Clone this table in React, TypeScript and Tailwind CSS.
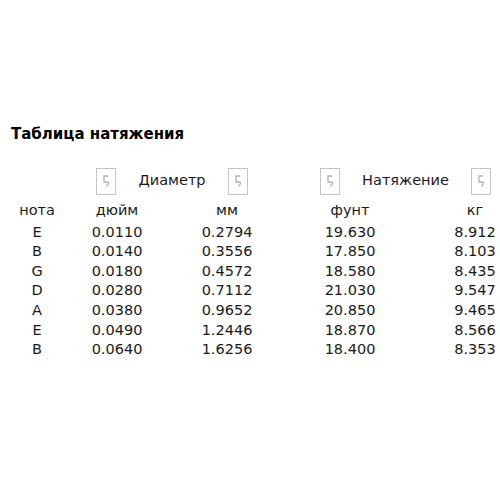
const rows = [
  ["E", "0.0110", "0.2794", "19.630", "8.912"],
  ["B", "0.0140", "0.3556", "17.850", "8.103"],
  ["G", "0.0180", "0.4572", "18.580", "8.435"],
  ["D", "0.0280", "0.7112", "21.030", "9.547"],
  ["A", "0.0380", "0.9652", "20.850", "9.465"],
  ["E", "0.0490", "1.2446", "18.870", "8.566"],
  ["B", "0.0640", "1.6256", "18.400", "8.353"],
];

function SortIcon() {
  return (
    <div className="w-[20px] h-[27px] border border-[#c4c4c4] bg-white flex items-center justify-center shrink-0">
      <svg width="12" height="16" viewBox="0 0 12 16" fill="none">
        <path d="M8 3 H4 V9 H7.5 Q8.5 9 8.5 10.5 L6.5 13.5" stroke="#b0b0b0" strokeWidth="1.3" />
      </svg>
    </div>
  );
}

const cols = "grid grid-cols-[74px_86px_134px_112px_1fr] text-center auto-rows-[19.6px] leading-[19.6px]";

export default function App() {
  return (
    <div className="w-[500px] h-[500px] bg-white text-[#1a1a1a] font-['DejaVu_Sans',sans-serif] text-[14.5px]">
      <div className="pt-[124px] pl-[11px] text-[15px] font-bold text-black leading-[20px]">
        Таблица натяжения
      </div>
      <div className="mt-[23px] flex items-center pl-[96px] h-[28px]">
        <SortIcon />
        <div className="w-[112px] text-center">Диаметр</div>
        <SortIcon />
        <div className="w-[72px]" />
        <SortIcon />
        <div className="w-[131px] text-center">Натяжение</div>
        <SortIcon />
      </div>
      <div className={`${cols} mt-[6px]`}>
        <div>нота</div>
        <div>дюйм</div>
        <div>мм</div>
        <div>фунт</div>
        <div className="pl-[44px]">кг</div>
      </div>
      <div className={`${cols} mt-[2px]`}>
        {rows.map((r, i) => (
          <div key={i} className="contents">
            <div>{r[0]}</div>
            <div>{r[1]}</div>
            <div>{r[2]}</div>
            <div>{r[3]}</div>
            <div className="pl-[44px]">{r[4]}</div>
          </div>
        ))}
      </div>
    </div>
  );
}
